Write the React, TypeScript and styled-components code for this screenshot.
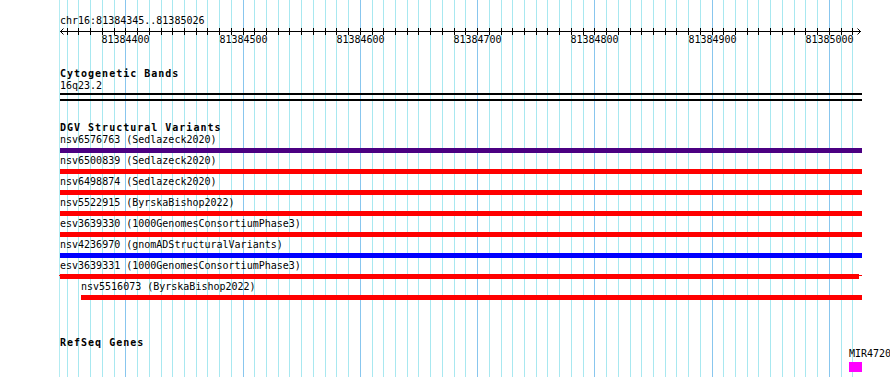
import React, { FC } from 'react';
import styled, { createGlobalStyle } from 'styled-components';

const GlobalStyle = createGlobalStyle`
  html, body {
    margin: 0;
    padding: 0;
    background: #ffffff;
  }
  body {
    font-family: "DejaVu Sans Mono", "Liberation Mono", monospace;
    color: #000000;
  }
`;

// view geometry: 10bp per minor grid step
const VIEW_LEFT = 60;
const VIEW_WIDTH = 802;
const FIRST_TICK = 66.7;
const TICK_STEP = 11.725;
const TICK_COUNT = 68;
const FIRST_LABEL_BP = 81384400;

const ticks = Array.from({ length: TICK_COUNT }, (_, k) => ({
  x: Math.round(FIRST_TICK + k * TICK_STEP),
  major: (k - 5) % 10 === 0,
  bp: FIRST_LABEL_BP + (k - 5) * 10,
}));

type Variant = {
  id: string;
  source: string;
  color: string;
  start: number;
  end: number;
  clipped?: boolean;
};

const variants: Variant[] = [
  { id: 'nsv6576763', source: 'Sedlazeck2020', color: '#4b0082', start: 0, end: 802 },
  { id: 'nsv6500839', source: 'Sedlazeck2020', color: '#ff0000', start: 0, end: 802 },
  { id: 'nsv6498874', source: 'Sedlazeck2020', color: '#ff0000', start: 0, end: 802 },
  { id: 'nsv5522915', source: 'ByrskaBishop2022', color: '#ff0000', start: 0, end: 802 },
  { id: 'esv3639330', source: '1000GenomesConsortiumPhase3', color: '#ff0000', start: 0, end: 802 },
  { id: 'nsv4236970', source: 'gnomADStructuralVariants', color: '#0000ff', start: 0, end: 802 },
  { id: 'esv3639331', source: '1000GenomesConsortiumPhase3', color: '#ff0000', start: 0, end: 799, clipped: true },
  { id: 'nsv5516073', source: 'ByrskaBishop2022', color: '#ff0000', start: 21, end: 802 },
];

const Page = styled('div')`
  position: relative;
  width: 890px;
  height: 377px;
  overflow: hidden;
  background: #ffffff;
`;

const GridLayer = styled('svg')`
  position: absolute;
  top: 0;
  left: 0;
  z-index: 0;
`;

const Tracks = styled('div')`
  position: relative;
  z-index: 1;
  margin-left: ${VIEW_LEFT}px;
  width: ${VIEW_WIDTH}px;
  display: flex;
  flex-direction: column;
`;

const LocationLabel = styled('div')`
  margin-top: 15px;
  font-size: 10px;
  line-height: 12px;
  white-space: nowrap;
`;

const RulerSvg = styled('svg')`
  display: block;
  overflow: visible;
`;

const TrackSection = styled('section')<{ $gap: number }>`
  margin-top: ${(p) => p.$gap}px;
  display: flex;
  flex-direction: column;
`;

const TrackTitle = styled('div')`
  font-size: 10px;
  line-height: 12px;
  font-weight: bold;
  letter-spacing: 1px;
  white-space: nowrap;
`;

const PlainLabel = styled('div')`
  font-size: 10px;
  line-height: 12px;
  white-space: nowrap;
`;

const BandBox = styled('div')`
  margin-top: 1px;
  height: 4px;
  border-top: 2px solid #000000;
  border-bottom: 2px solid #000000;
`;

const VariantRow = styled('div')<{ $indent: number }>`
  display: flex;
  flex-direction: column;
  padding-left: ${(p) => p.$indent}px;
  padding-bottom: 2px;
`;

const VariantBar = styled('div')<{ $color: string; $clipped?: boolean }>`
  position: relative;
  margin-top: 2px;
  height: 5px;
  background: ${(p) => p.$color};

  ${(p) => p.$clipped && `
    &::before, &::after {
      content: '';
      position: absolute;
      top: 1px;
      height: 1px;
      background: ${p.$color};
    }
    &::before { left: -1px; width: 1px; }
    &::after { right: -3px; width: 3px; }
  `}
`;

const GeneArea = styled('div')`
  margin-top: -1px;
  padding-left: 789px;
  display: flex;
  flex-direction: column;
`;

const GeneBox = styled('div')`
  margin-top: 2px;
  width: 13px;
  height: 10px;
  background: #ff00ff;
`;

const Grid: FC = () => (
  <GridLayer width={890} height={377}>
    <line x1={59.5} y1={0} x2={59.5} y2={377} stroke='#b4ecf2' strokeWidth={1} />
    {ticks.map((t) => (
      <line
        key={`grid-${t.x}`}
        x1={t.x + 0.5}
        y1={0}
        x2={t.x + 0.5}
        y2={377}
        stroke={t.major ? '#88c6ee' : '#a8e8f0'}
        strokeWidth={1}
      />
    ))}
  </GridLayer>
);

const Ruler: FC = () => (
  <RulerSvg width={VIEW_WIDTH} height={20}>
    <line x1={0} y1={4.5} x2={VIEW_WIDTH - 1} y2={4.5} stroke='#000' strokeWidth={1} />
    <polyline points='3.5,1.5 0.5,4.5 3.5,7.5' fill='none' stroke='#000' strokeWidth={1} />
    <polyline points={`${VIEW_WIDTH - 4.5},1.5 ${VIEW_WIDTH - 1.5},4.5 ${VIEW_WIDTH - 4.5},7.5`} fill='none' stroke='#000' strokeWidth={1} />
    {ticks.map((t) => (
      <line
        key={`tick-${t.x}`}
        x1={t.x - VIEW_LEFT + 0.5}
        y1={1}
        x2={t.x - VIEW_LEFT + 0.5}
        y2={8}
        stroke='#000'
        strokeWidth={1}
      />
    ))}
    {ticks.filter((t) => t.major).map((t) => (
      <text
        key={`label-${t.bp}`}
        x={t.x - VIEW_LEFT + 0.5}
        y={15.6}
        textAnchor='middle'
        fontSize={10}
        fontFamily='"DejaVu Sans Mono", monospace'
        fill='#000'
      >
        {t.bp}
      </text>
    ))}
  </RulerSvg>
);

const App: FC = () => {
  return (
    <Page>
      <GlobalStyle />
      <Grid />
      <Tracks>
        <LocationLabel>chr16:81384345..81385026</LocationLabel>
        <Ruler />

        <TrackSection $gap={21}>
          <TrackTitle>Cytogenetic Bands</TrackTitle>
          <PlainLabel>16q23.2</PlainLabel>
          <BandBox />
        </TrackSection>

        <TrackSection $gap={21}>
          <TrackTitle>DGV Structural Variants</TrackTitle>
          {
            variants.map((item) => {
              return (
                <VariantRow key={`variant-${item.id}`} $indent={item.start}>
                  <PlainLabel>{`${item.id} (${item.source})`}</PlainLabel>
                  <VariantBar
                    $color={item.color}
                    $clipped={item.clipped}
                    style={{ marginRight: VIEW_WIDTH - item.end }}
                  />
                </VariantRow>
              );
            })
          }
        </TrackSection>

        <TrackSection $gap={35}>
          <TrackTitle>RefSeq Genes</TrackTitle>
          <GeneArea>
            <PlainLabel>MIR4720</PlainLabel>
            <GeneBox />
          </GeneArea>
        </TrackSection>
      </Tracks>
    </Page>
  );
};

export default App;
